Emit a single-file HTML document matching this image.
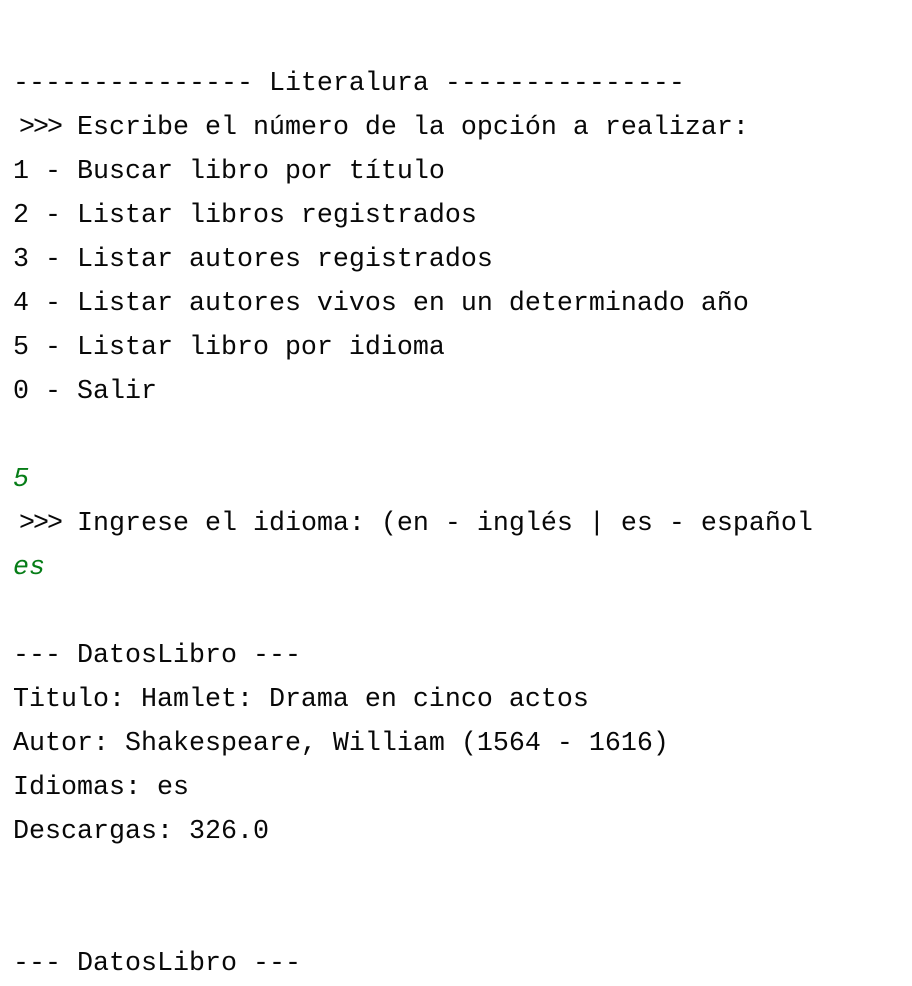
<!DOCTYPE html>
<html><head><meta charset="utf-8"><style>
html,body{margin:0;padding:0;background:#fff;width:912px;height:954px;overflow:hidden}
pre{margin:0;position:absolute;left:13px;top:62px;font-family:"Liberation Mono","DejaVu Sans Mono",monospace;font-size:26.67px;line-height:44px;color:#080808}
.g{color:#067d17;font-style:italic}
.p{padding-left:6px;letter-spacing:-2px}
</style></head><body>
<pre>--------------- Literalura ---------------
<span class="p">&gt;&gt;&gt;</span> Escribe el número de la opción a realizar:
1 - Buscar libro por título
2 - Listar libros registrados
3 - Listar autores registrados
4 - Listar autores vivos en un determinado año
5 - Listar libro por idioma
0 - Salir

<span class="g">5</span>
<span class="p">&gt;&gt;&gt;</span> Ingrese el idioma: (en - inglés | es - español
<span class="g">es</span>

--- DatosLibro ---
Titulo: Hamlet: Drama en cinco actos
Autor: Shakespeare, William (1564 - 1616)
Idiomas: es
Descargas: 326.0


--- DatosLibro ---</pre>
</body></html>
